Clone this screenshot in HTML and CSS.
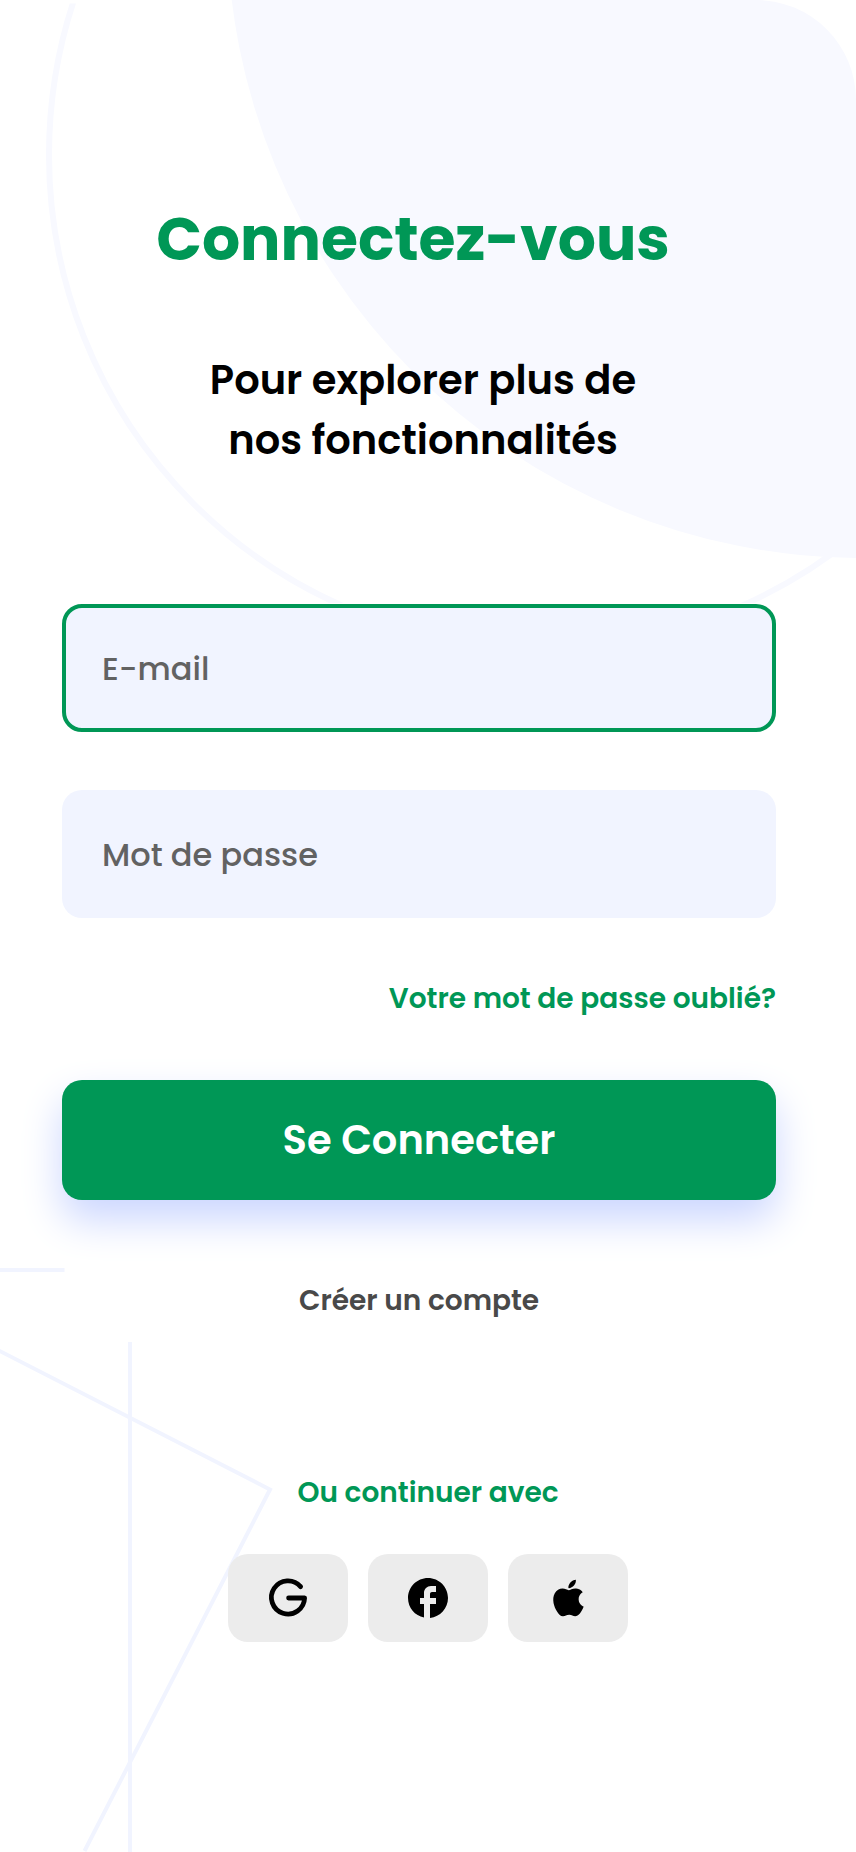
FILE: index.html
```html
<!DOCTYPE html>
<html lang="fr">
<head>
<meta charset="utf-8">
<title>Connectez-vous</title>
<link rel="stylesheet" href="styles.css">
</head>
<body>
<div class="screen">
  <svg class="backdrop" viewBox="0 0 856 1852" aria-hidden="true">
    <defs><clipPath id="ring-clip"><rect x="0" y="3.5" width="856" height="599.5"/></clipPath></defs>
    <circle class="ring" cx="542" cy="155" r="493" clip-path="url(#ring-clip)"/>
    <circle class="disc" cx="862" cy="-77" r="635"/>
    <path class="line" d="M0 1270H64.5M130 1342V1852M-10 1346L270 1489.5L84.5 1851"/>
  </svg>
  <main class="content">
    <h1 class="title">Connectez-vous</h1>
    <p class="subtitle">Pour explorer plus de<br>nos fonctionnalités</p>
    <form class="form">
      <label class="field field-active">E-mail</label>
      <label class="field">Mot de passe</label>
      <a class="forgot">Votre mot de passe oublié?</a>
      <button class="submit" type="button">Se Connecter</button>
    </form>
    <a class="create">Créer un compte</a>
    <section class="social">
      <p class="social-title">Ou continuer avec</p>
      <div class="social-row">
        <button class="social-btn" type="button" aria-label="Google">
          <svg width="48" height="48" viewBox="0 0 48 48"><path class="g-stroke" d="M36.6 12.6A16.6 16.6 0 1 0 40.6 24H24.6"/></svg>
        </button>
        <button class="social-btn" type="button" aria-label="Facebook">
          <svg width="48" height="48" viewBox="0 0 24 24"><path d="M22 12c0-5.52-4.48-10-10-10S2 6.48 2 12c0 4.84 3.44 8.87 8 9.8V15H8v-3h2V9.5C10 7.57 11.57 6 13.5 6H16v3h-2c-.55 0-1 .45-1 1v2h3v3h-3v6.95c5.05-.5 9-4.76 9-9.95z"/></svg>
        </button>
        <button class="social-btn" type="button" aria-label="Apple">
          <svg width="45" height="44" viewBox="0 0 24 24" preserveAspectRatio="none"><path d="M18.71 19.5c-.83 1.24-1.71 2.45-3.05 2.47-1.34.03-1.77-.79-3.29-.79-1.53 0-2 .77-3.27.82-1.31.05-2.3-1.32-3.14-2.53C4.25 17 2.94 12.45 4.7 9.39c.87-1.52 2.43-2.48 4.12-2.51 1.28-.02 2.5.87 3.29.87.78 0 2.26-1.07 3.81-.91.65.03 2.47.26 3.64 1.98-.09.06-2.17 1.28-2.15 3.81.03 3.02 2.65 4.03 2.68 4.04-.03.07-.42 1.44-1.38 2.83M13 3.5c.73-.83 1.94-1.46 2.94-1.5.13 1.17-.34 2.35-1.04 3.19-.69.85-1.83 1.51-2.95 1.42-.15-1.15.41-2.35 1.05-3.11z"/></svg>
        </button>
      </div>
    </section>
  </main>
</div>
</body>
</html>
```
FILE: styles.css
```css
* { box-sizing: border-box; }
body {
  margin: 0;
  background: #fff;
  font-family: Poppins, Inter, "Open Sans", sans-serif;
  color: #000;
}
.screen {
  position: relative;
  width: 856px;
  height: 1852px;
  overflow: hidden;
  border-top-right-radius: 100px;
}
.backdrop { position: absolute; inset: 0; width: 856px; height: 1852px; }
.ring { fill: none; stroke: #f8f9ff; stroke-width: 6; }
.disc { fill: #f8f9ff; }
.line { fill: none; stroke: #f1f4ff; stroke-width: 4; }
.content {
  position: relative;
  display: flex;
  flex-direction: column;
  padding: 194px 80px 0 62px;
}
.title {
  margin: 0;
  padding-right: 12px;
  text-align: center;
  font-size: 60px;
  font-weight: 700;
  line-height: 90px;
  color: #009756;
}
.subtitle {
  margin: 66px 0 0;
  padding-left: 8px;
  text-align: center;
  font-size: 40px;
  font-weight: 600;
  line-height: 60px;
}
.form { display: flex; flex-direction: column; margin-top: 134px; }
.field {
  display: flex;
  align-items: center;
  height: 128px;
  padding: 2px 40px 0;
  border-radius: 20px;
  background: #f1f4ff;
  color: #626262;
  font-size: 32px;
  font-weight: 500;
}
.field + .field { margin-top: 58px; }
.field-active { padding: 2px 36px 0; border: 4px solid #009756; }
.forgot {
  align-self: flex-end;
  margin-top: 60px;
  font-size: 28px;
  font-weight: 600;
  line-height: 42px;
  color: #009756;
}
.submit {
  height: 120px;
  margin-top: 60px;
  border: 0;
  border-radius: 20px;
  background: #009756;
  box-shadow: 0 20px 40px #cbd6ff;
  color: #fff;
  font: inherit;
  font-size: 40px;
  font-weight: 600;
}
.create {
  margin-top: 80px;
  text-align: center;
  font-size: 28px;
  font-weight: 600;
  line-height: 42px;
  color: #494949;
}
.social { margin: 150px -9px 0 9px; }
.social-title {
  margin: 0;
  text-align: center;
  font-size: 28px;
  font-weight: 600;
  line-height: 42px;
  color: #009756;
}
.social-row { display: flex; justify-content: center; gap: 20px; margin-top: 40px; }
.social-btn {
  display: flex;
  align-items: center;
  justify-content: center;
  width: 120px;
  height: 88px;
  padding: 0;
  border: 0;
  border-radius: 20px;
  background: #ececec;
}
.g-stroke { fill: none; stroke: #000; stroke-width: 4.8; stroke-linecap: round; stroke-linejoin: round; }
```
